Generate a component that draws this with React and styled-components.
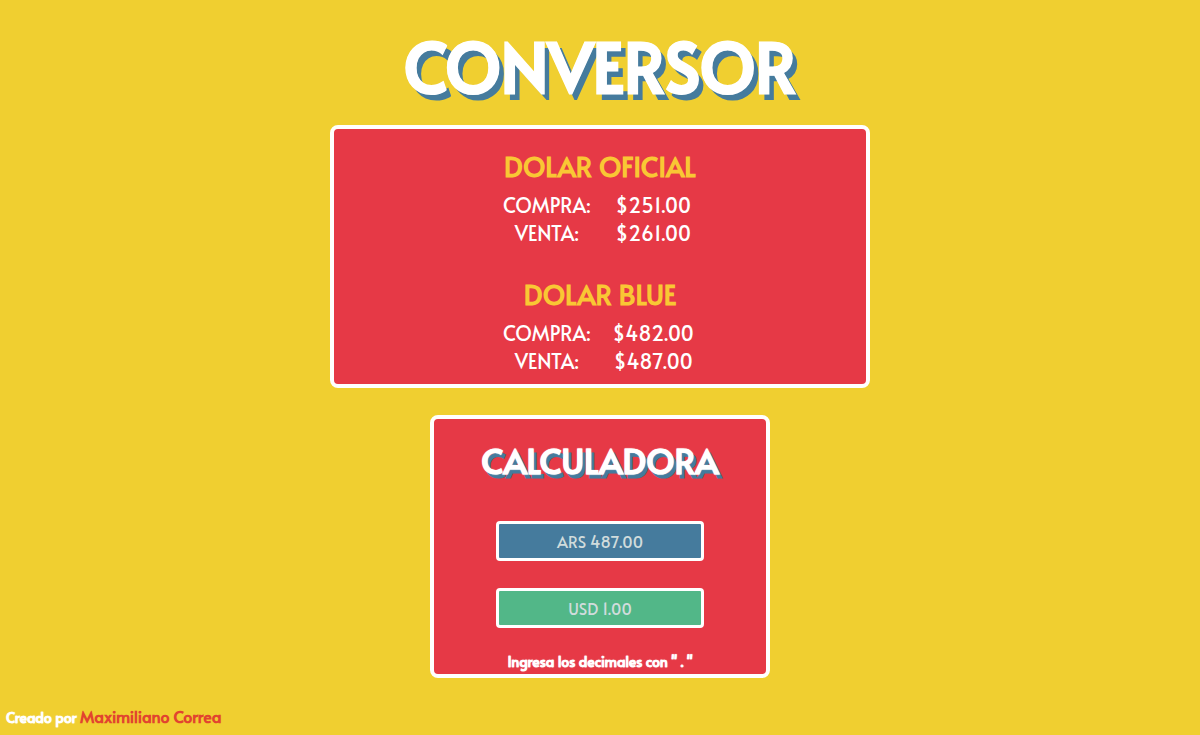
import React, { useState } from "react"
import styled, { createGlobalStyle } from "styled-components"

const GlobalStyle = createGlobalStyle`
* {
  box-sizing: border-box;
}
body {
  margin: 0;
  background-color: #f0cf30;
  font-family: Alata, Lato, "Open Sans", sans-serif;
  color: white;
}
`

const Tela = styled.div`
display: flex;
flex-direction: column;
min-height: 100vh;
`

const Principal = styled.main`
display: flex;
flex-direction: column;
align-items: center;
flex: 1;
padding-top: 22px;
`

const Titulo = styled.h1`
margin: 0 0 15px;
font-size: 67px;
line-height: 88px;
text-shadow: 5px 6px #457b9d;
-webkit-text-stroke: 1px white;
`

const Painel = styled.section`
display: flex;
flex-direction: column;
align-items: center;
width: ${(props) => props.$largura};
min-width: 300px;
border: 4px solid white;
border-radius: 8px;
background-color: #e63946;
`

const Cotacoes = styled(Painel)`
gap: 28px;
margin-bottom: 27px;
padding: 18px 0 9px;
`

const Calculadora = styled(Painel)`
padding: 18px 0 5px;
`

const Cotacao = styled.div`
width: 40%;
min-width: 212px;
`

const Nome = styled.h2`
margin: 0 0 5px;
font-size: 27px;
line-height: 39px;
text-align: center;
white-space: nowrap;
color: #f9c734;
`

const Tabela = styled.table`
width: 100%;
table-layout: fixed;
border-collapse: collapse;
font-size: 20px;
line-height: 28px;
text-align: center;

th, td {
  padding: 0;
  font-weight: 500;
}
td {
  font-kerning: none;
}
`

const Subtitulo = styled.h2`
margin: 0 0 36px;
font-size: 34px;
line-height: 48px;
text-shadow: 0 0 1px white, 3px 4px #457b9d;
`

const Campo = styled.input`
width: 208px;
height: 40px;
margin-bottom: 27px;
padding: 0 8px;
border: 3px solid white;
border-radius: 4px;
background-color: ${(props) => props.$cor};
font-family: inherit;
font-size: 16px;
font-kerning: none;
text-align: center;
color: white;
outline: none;

&::placeholder {
  color: #d0dcdc;
  opacity: 1;
}
`

const Aviso = styled.p`
margin: 0;
font-size: 14px;
font-weight: 900;
line-height: 14px;
text-shadow: 0 0 1px white;
`

const Rodape = styled.footer`
padding: 0 6px 7px;
font-size: 14px;
font-weight: 900;
line-height: 20px;
text-shadow: 0 0 1px white;
`

const Autor = styled.a`
font-size: 16px;
font-weight: 700;
text-decoration: none;
text-shadow: none;
color: #e2442f;
`

const dolares = [
  { nome: "DOLAR OFICIAL", compra: 251, venta: 261 },
  { nome: "DOLAR BLUE", compra: 482, venta: 487 },
]

const blue = dolares[1].venta

export default function App() {
  const [ars, setArs] = useState("")
  const [usd, setUsd] = useState("")

  const cambiarArs = (e) => {
    const valor = e.target.value
    setArs(valor)
    setUsd(Number(valor) ? (Number(valor) / blue).toFixed(2) : "")
  }

  const cambiarUsd = (e) => {
    const valor = e.target.value
    setUsd(valor)
    setArs(Number(valor) ? (Number(valor) * blue).toFixed(2) : "")
  }

  return (
    <Tela>
      <GlobalStyle />
      <Principal>
        <Titulo>CONVERSOR</Titulo>
        <Cotacoes $largura="45%">
          {dolares.map((dolar) => (
            <Cotacao key={dolar.nome}>
              <Nome>{dolar.nome}</Nome>
              <Tabela>
                <tbody>
                  <tr>
                    <th scope="row">COMPRA:</th>
                    <td>${dolar.compra.toFixed(2)}</td>
                  </tr>
                  <tr>
                    <th scope="row">VENTA:</th>
                    <td>${dolar.venta.toFixed(2)}</td>
                  </tr>
                </tbody>
              </Tabela>
            </Cotacao>
          ))}
        </Cotacoes>
        <Calculadora $largura="340px">
          <Subtitulo>CALCULADORA</Subtitulo>
          <Campo $cor="#457b9d" aria-label="ARS" placeholder="ARS 487.00" value={ars} onChange={cambiarArs} />
          <Campo $cor="#52b788" aria-label="USD" placeholder="USD 1.00" value={usd} onChange={cambiarUsd} />
          <Aviso>Ingresa los decimales con " . "</Aviso>
        </Calculadora>
      </Principal>
      <Rodape>
        Creado por <Autor href="#">Maximiliano Correa</Autor>
      </Rodape>
    </Tela>
  )
}
